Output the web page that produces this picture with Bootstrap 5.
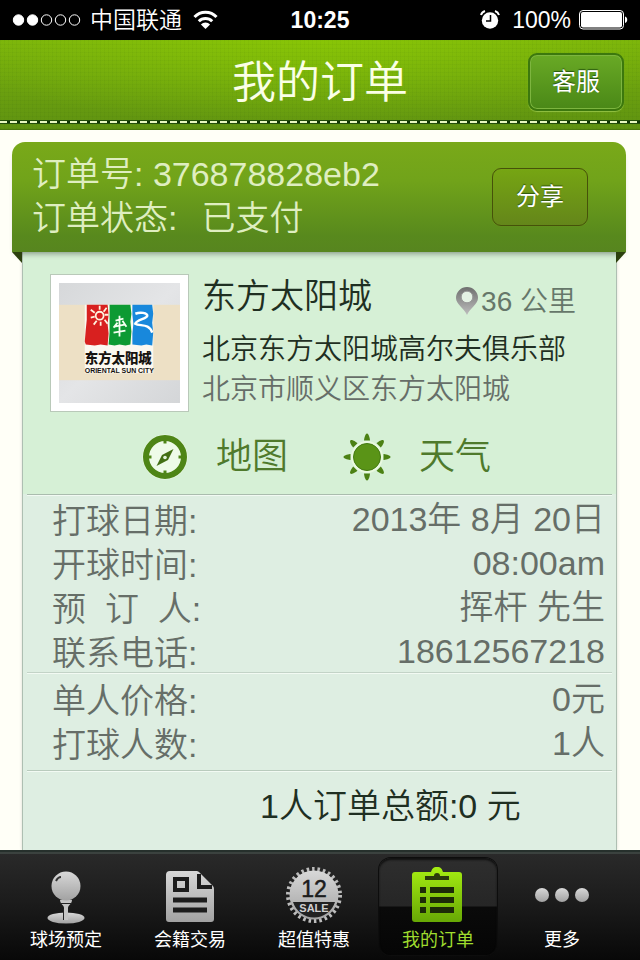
<!DOCTYPE html>
<html lang="zh-CN">
<head>
<meta charset="utf-8">
<meta name="viewport" content="width=device-width, initial-scale=1">
<title>我的订单</title>
<link href="https://cdn.jsdelivr.net/npm/bootstrap@5.3.0/dist/css/bootstrap.min.css" rel="stylesheet">
<style>
body{background:#fffff7;font-family:"Liberation Sans","Noto Sans CJK SC",sans-serif;font-weight:350;color:#666e68}
a{text-decoration:none;color:inherit}
svg{display:block;flex:none}
.status{background:#000;color:#fff;height:40px;padding:0 12px;font-size:23px;line-height:40px}
.titlebar{height:90px;padding:2px 16px 7px;position:relative;
 background:
 repeating-linear-gradient(0deg,rgba(0,50,0,.03) 0 1px,transparent 1px 4px),
 repeating-linear-gradient(90deg,rgba(0,50,0,.03) 0 1px,transparent 1px 4px),
 radial-gradient(ellipse 60% 100% at 50% 0,rgba(150,215,0,.5),transparent),
 linear-gradient(#7bb30c,#5f9211);
 border-bottom:1px solid #4d7a10}
.titlebar::after{content:"";position:absolute;left:0;right:0;bottom:5px;height:4px;
 background:repeating-linear-gradient(90deg,#e8f7c0 0 7px,#123806 7px 10px) 0 1px/100% 2px no-repeat,#234d0a}
.titlebar h1{font-size:44px;line-height:60px;padding-top:2px;font-weight:350;color:#fbffe6}
.pill{font-size:24px;line-height:32px;font-weight:400;height:58px;width:96px;border-radius:9px;color:#fff;text-shadow:0 -1px 1px rgba(0,40,0,.6);padding:0}
.pill:hover{color:#fff}
.pill-service{border:2px solid #3c780d;background:linear-gradient(#69a925,#4a8817);box-shadow:inset 0 0 0 1px #7db53f,0 1px 1px #93c144}
.pill-share{border:1px solid #46520a;background:linear-gradient(#76a513,#64861a);box-shadow:0 0 1px #7e9a1a}
.sheet{margin:12px 14px 0 12px}
.ribbon{position:relative;z-index:1;height:110px;padding:10px 38px 0 20px;border-radius:13px 13px 0 0;background:linear-gradient(#79a919 0,#71a31a 35%,#58891d 85%,#57851f);
 color:#dfeec0;font-size:34px;line-height:44px;box-shadow:0 5px 6px -4px rgba(0,0,0,.45)}
.ribbon::before,.ribbon::after{content:"";position:absolute;top:100%;width:10px;height:11px;background:#2c400e}
.ribbon::before{left:0;clip-path:polygon(0 0,100% 0,100% 100%)}
.ribbon::after{right:0;clip-path:polygon(0 0,100% 0,0 100%)}
.ticket{margin:0 9px 0 10px;border:1px solid #aebfb2;border-width:0 1px;background:#deeee2;box-shadow:0 0 3px rgba(0,0,0,.15)}
.venue{background:#d6f0d6;padding:22px 27px 0}
.thumb{width:139px;height:138px;padding:8px;background:#fff;border:1px solid #b9c9b9;flex:none}
.info{margin-left:13px}
.name-line{font-size:34px;line-height:44px;color:#1f2f22}
.small-line{font-size:28px;line-height:40px}
.club{padding-top:8px;color:#1f2f22}
.distance{color:#66776a;padding:8px 13px 0 0}
.acts{height:82px;color:#4f7a2c;font-size:36px;line-height:44px;padding:8px 0 0 92px}
.acts a{gap:28px}
.acts a + a{margin-left:55px}
.facts{margin:0 4px;border-top:1px solid #aabcae;box-shadow:inset 0 1px 0 #f2faf3;font-size:34px;line-height:44px;padding:2px 7px 0 25px}
.facts + .facts{border-top-color:#c3d3c7;padding-top:4px;padding-bottom:5px}
.facts dt{font-weight:350;padding-top:2px;height:44px;white-space:pre}
.facts dd{margin:0;height:44px}
.facts:first-of-type{height:178px}
.total{margin:0 4px;border-top:1px solid #b9cbbd;box-shadow:inset 0 1px 0 #f2faf3;font-size:34px;line-height:44px;padding:13px 0 22px 233px;color:#1f2f22}
.tabs{height:110px;padding:6px 16px 5px 4px;background:linear-gradient(#2a2a2a,#1c1c1c 45%,#080808);border-top:2px solid #26302c;box-shadow:inset 0 2px 0 #3b423f;font-size:18px;font-weight:400;line-height:24px;color:#fff}
.tabs a{flex:1 1 0;border-radius:12px;margin:0 3px;padding-top:8px;gap:2px}
.tabs svg{width:60px;height:60px}
.tabs .current{color:#9fdc2e;background:linear-gradient(#2e2e2e,#262626 49%,#0a0a0a 51%,#050505);box-shadow:0 0 0 1px #0d0d0d,inset 0 2px 2px #111}
</style>
<script src="https://cdn.jsdelivr.net/npm/bootstrap@5.3.0/dist/js/bootstrap.bundle.min.js"></script>
</head>
<body class="d-flex flex-column min-vh-100">
<div class="status d-flex align-items-center">
  <div class="col d-flex align-items-center">
    <svg width="70" height="14" viewBox="0 0 70 14" fill="#fff" stroke="#fff"><circle cx="6.500" cy="7" r="5.200"/><circle cx="20.500" cy="7" r="5.200"/><g fill="none"><circle cx="34.500" cy="7" r="5.200"/><circle cx="48.500" cy="7" r="5.200"/><circle cx="62.500" cy="7" r="5.200"/></g></svg>
    <span class="ms-2">中国联通</span>
    <svg class="ms-2 me-1" width="28" height="20" viewBox="0 0 28 20" fill="none" stroke="#fff" stroke-width="3"><path d="M4.500 7a15 15 0 0 1 22 0M8.800 11.300a9.500 9.500 0 0 1 13.400 0"/><path d="M15.500 19l-4.600-4.600a6.600 6.600 0 0 1 9.200 0z" fill="#fff" stroke="none"/></svg>
  </div>
  <div class="fw-bold">10:25</div>
  <div class="col d-flex align-items-center justify-content-end">
    <svg width="20" height="20" viewBox="0 0 20 20"><circle cx="10" cy="10.500" r="8.200" fill="#fff"/><path d="M1 5a6 6 0 0 1 4-4M19 5a6 6 0 0 0-4-4" stroke="#fff" stroke-width="2" fill="none"/><path d="M10.500 5v6H6" stroke="#000" stroke-width="1.500" fill="none"/></svg>
    <span class="mx-2 ps-1">100%</span>
    <svg width="49" height="20" viewBox="0 0 49 20"><rect x=".5" y=".5" width="44" height="18.500" rx="3.500" fill="none" stroke="#fff"/><rect x="2" y="2" width="41" height="15.500" rx="2" fill="#fff"/><path d="M46 6.500c3 .5 3 6 0 6.500z" fill="#fff"/></svg>
  </div>
</div>

<header class="titlebar d-flex align-items-center">
  <div class="col"></div>
  <h1 class="mb-0">我的订单</h1>
  <div class="col d-flex justify-content-end"><button type="button" class="btn pill pill-service">客服</button></div>
</header>

<main class="flex-grow-1 d-flex flex-column">
 <div class="sheet flex-grow-1 d-flex flex-column">
  <div class="ribbon d-flex justify-content-between">
    <div>
      <div>订单号: 376878828eb2</div>
      <div>订单状态:<span class="ps-4">已支付</span></div>
    </div>
    <button type="button" class="btn pill pill-share mt-3">分享</button>
  </div>
  <div class="ticket flex-grow-1">
    <section class="venue">
      <div class="d-flex">
        <div class="thumb">
          <svg class="w-100 h-100" viewBox="59 282 122 121" preserveAspectRatio="none">
            <defs><linearGradient id="gy" x1="0" y1="0" x2="1" y2="1"><stop offset="0" stop-color="#d6d8da"/><stop offset=".5" stop-color="#e4e5e7"/><stop offset="1" stop-color="#d4d6d8"/></linearGradient></defs>
            <rect x="59" y="282" width="122" height="121" fill="url(#gy)"/>
            <rect x="59" y="304" width="122" height="76" fill="#ede0c5"/>
            <rect x="85" y="304" width="69" height="69" fill="#fbf8f0"/>
            <path d="M87 304h21l1 10-1 9 1 10-1 12-7-1-6 1-9-1-1-3 1-12 1-10z" fill="#d8201f"/>
            <path d="M110 304h21l1 9-1 8 1 10-1 13-5 1-6-1-5 1-6-1 1-12v-10z" fill="#0d9a33"/>
            <path d="M133 304h20l1 9-1 9 1 10-1 13-6-1-5 1-9-1v-11l1-10-1-9z" fill="#1888dc"/>
            <circle cx="100" cy="315" r="4" fill="none" stroke="#fff3df" stroke-width="1.800"/>
            <path d="M100 305v4M91 309l4 3M91 317l4-1M94 324l3-4M101 325v-4M108 323l-3-4M109 314h-4M107 307l-3 4" stroke="#fff3df" stroke-width="1.800"/>
            <path d="M120 315v21M116 320l8-2M115 326l10-2M114 332l12-2M118 322l-4 5M123 320l4 6" stroke="#f6fff2" stroke-width="1.800" fill="none"/>
            <path d="M136 313c5-2 12-1 12 2s-11 4-12 8c4 3 14-1 17 9" fill="none" stroke="#fff" stroke-width="2.500"/>
            <text x="85" y="363" font-family="Noto Sans CJK SC" font-weight="900" font-size="13.500" fill="#17130f">东方太阳城</text>
            <text x="85" y="373" font-family="Liberation Sans" font-weight="700" font-size="7" fill="#17130f">ORIENTAL SUN CITY</text>
          </svg>
        </div>
        <div class="info flex-grow-1">
          <div class="d-flex justify-content-between name-line">
            <div>东方太阳城</div>
            <div class="small-line distance d-flex align-items-center">
              <svg width="26" height="30" viewBox="0 0 26 30"><defs><linearGradient id="pn" x1="0" y1="0" x2="0" y2="1"><stop offset="0" stop-color="#6f6f6f"/><stop offset="1" stop-color="#bdbdbd"/></linearGradient></defs><path d="M12 28C9 21 1 17 1 11a11 11 0 0 1 22 0c0 6-8 10-11 17z" fill="url(#pn)"/><circle cx="12" cy="10" r="5.800" fill="#e4f1e4" stroke="#9a9a9a"/></svg>
              <span>36 公里</span>
            </div>
          </div>
          <div class="small-line club">北京东方太阳城高尔夫俱乐部</div>
          <div class="small-line">北京市顺义区东方太阳城</div>
        </div>
      </div>
      <nav class="acts d-flex align-items-center">
        <a href="#map" class="d-flex align-items-center">
          <svg width="46" height="46" viewBox="0 0 46 46"><circle cx="23" cy="23" r="22.500" fill="#eefbe8"/><circle cx="23" cy="23" r="19" fill="none" stroke="#4e8516" stroke-width="6"/><path d="M23 6v3.500M23 36.500v3.500M6 23h3.500M36.500 23h3.500" stroke="#4e8516" stroke-width="3"/><path d="M31.500 15l-5.500 11-11.500 6 5.500-11z" fill="#437014"/><circle cx="23" cy="23.500" r="1.800" fill="#e2f5dc"/></svg>
          <span>地图</span></a>
        <a href="#weather" class="d-flex align-items-center">
          <svg width="48" height="48" viewBox="0 0 48 48"><defs><g id="ry"><path d="M24 .5c2 0 3 6 3 7h-6c0-1 1-7 3-7z"/></g></defs><circle cx="24" cy="24" r="16" fill="#e9f9e0"/><circle cx="24" cy="24" r="13.500" fill="#5a9417" stroke="#437a10"/><g fill="#4c8114"><use href="#ry"/><use href="#ry" transform="rotate(45 24 24)"/><use href="#ry" transform="rotate(90 24 24)"/><use href="#ry" transform="rotate(135 24 24)"/><use href="#ry" transform="rotate(180 24 24)"/><use href="#ry" transform="rotate(225 24 24)"/><use href="#ry" transform="rotate(270 24 24)"/><use href="#ry" transform="rotate(315 24 24)"/></g></svg>
          <span>天气</span></a>
      </nav>
    </section>
    <dl class="facts mb-0">
      <div class="d-flex justify-content-between"><dt>打球日期:</dt><dd>2013年 8月 20日</dd></div>
      <div class="d-flex justify-content-between"><dt>开球时间:</dt><dd>08:00am</dd></div>
      <div class="d-flex justify-content-between"><dt>预  订  人:</dt><dd>挥杆 先生</dd></div>
      <div class="d-flex justify-content-between"><dt>联系电话:</dt><dd>18612567218</dd></div>
    </dl>
    <dl class="facts mb-0">
      <div class="d-flex justify-content-between"><dt>单人价格:</dt><dd>0元</dd></div>
      <div class="d-flex justify-content-between"><dt>打球人数:</dt><dd>1人</dd></div>
    </dl>
    <div class="total">1人订单总额:0 元</div>
  </div>
 </div>
</main>

<nav class="tabs d-flex text-center">
  <a href="#book" class="d-flex flex-column align-items-center">
    <svg viewBox="0 0 60 60"><defs><linearGradient id="sv" x1="0" y1="0" x2="0" y2="1"><stop offset="0" stop-color="#d8d8d8"/><stop offset="1" stop-color="#a2a2a2"/></linearGradient></defs><ellipse cx="30" cy="52" rx="18.500" ry="5.500" fill="url(#sv)"/><path d="M24 34h12c0 4-4 5-4 8v12h-4V42c0-3-4-4-4-8z" fill="#c4c4c4"/><path d="M24 37.500h12M27.500 43v11" stroke="#222"/><circle cx="30" cy="20" r="14.500" fill="url(#sv)"/><path d="M20 15q2-4 5-4" stroke="#333" stroke-width="2" fill="none"/></svg>
    <span>球场预定</span></a>
  <a href="#member" class="d-flex flex-column align-items-center">
    <svg viewBox="0 0 60 60"><path d="M10 5h26a4 4 0 0 1 3 1l14 14a4 4 0 0 1 1 3v30a3 3 0 0 1-3 3H9a3 3 0 0 1-3-3V9a4 4 0 0 1 4-4z" fill="url(#sv)"/><path d="M15 13h12v11H15z" fill="none" stroke="#1c1c1c" stroke-width="4"/><path d="M39 8v13h13" fill="none" stroke="#1c1c1c" stroke-width="4"/><path d="M13 34h34M13 44h34" stroke="#1c1c1c" stroke-width="5"/></svg>
    <span>会籍交易</span></a>
  <a href="#sale" class="d-flex flex-column align-items-center">
    <svg viewBox="0 0 60 60"><circle cx="30" cy="29" r="25.500" fill="none" stroke="#bcbcbc" stroke-width="5" stroke-dasharray="2.500 2.840"/><circle cx="30" cy="29" r="24.500" fill="url(#sv)"/><path d="M9 36h42a22 22 0 0 1-42 0z" fill="#222"/><text x="30" y="31" text-anchor="middle" font-family="Liberation Sans" font-size="23" fill="#1c1c1c" stroke="#1c1c1c" stroke-width=".5">12</text><text x="30" y="46" text-anchor="middle" font-family="Liberation Sans" font-weight="700" font-size="11" fill="#d0d0d0">SALE</text></svg>
    <span>超值特惠</span></a>
  <a href="#orders" class="current d-flex flex-column align-items-center" aria-current="page">
    <svg viewBox="0 0 60 60"><defs><linearGradient id="gn" x1="0" y1="0" x2="0" y2="1"><stop offset="0" stop-color="#a6ee12"/><stop offset="1" stop-color="#67a805"/></linearGradient></defs><path d="M7 6h16c1-3 2-5 6-5s5 2 6 5h16a3 3 0 0 1 3 3v44a3 3 0 0 1-3 3H7a3 3 0 0 1-3-3V9a3 3 0 0 1 3-3z" fill="url(#gn)"/><path d="M17 10h9a3 3 0 1 1 6 0h9v4H17z" fill="#2b3a0c"/><path d="M12 24h6M22 24h24M12 34h6M22 34h24M12 44h6M22 44h24" stroke="#1d2b08" stroke-width="6"/></svg>
    <span>我的订单</span></a>
  <a href="#more" class="d-flex flex-column align-items-center">
    <svg viewBox="0 0 60 60"><g fill="url(#sv)"><circle cx="10" cy="29" r="7"/><circle cx="30" cy="29" r="7"/><circle cx="50" cy="29" r="7"/></g></svg>
    <span>更多</span></a>
</nav>
</body>
</html>
